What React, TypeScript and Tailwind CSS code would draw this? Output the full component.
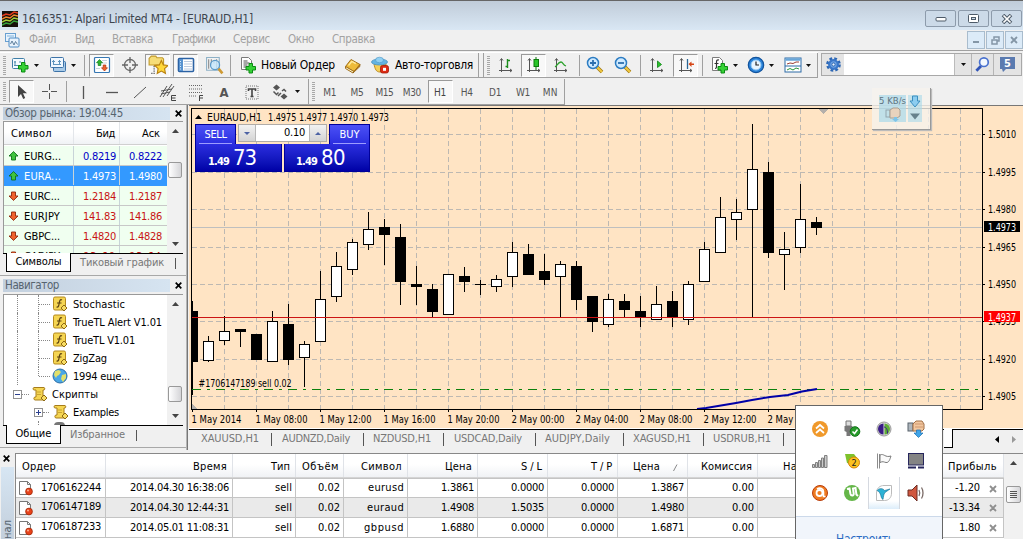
import { useLayoutEffect, useRef, type ReactNode } from "react";

/* Text set to a fixed measure: the tracking is worked out from the natural width. */
function Fit({ w, className = "", children }: { w: number; className?: string; children: string }) {
  const ref = useRef<HTMLSpanElement>(null);
  useLayoutEffect(() => {
    const el = ref.current;
    if (!el) return;
    el.style.letterSpacing = "0px";
    const natural = el.getBoundingClientRect().width;
    el.style.letterSpacing = `${(w - natural) / children.length}px`;
  }, [w, children]);
  return (
    <span ref={ref} className={`inline-block shrink-0 whitespace-pre ${className}`}>
      {children}
    </span>
  );
}

/* ---------- toolbar parts ---------- */

const PRESSED =
  "flex h-[23px] w-[25px] shrink-0 items-center justify-center border border-r-white border-b-white border-l-[#9a9a9a] border-t-[#9a9a9a] bg-[#f8f8f8]";

const Cell = ({ className, children }: { className: string; children: ReactNode }) => (
  <div className={`flex h-full shrink-0 items-center justify-center ${className}`}>{children}</div>
);
const Sep = ({ className = "" }: { className?: string }) => (
  <div className={`h-[21px] w-px shrink-0 bg-[#a0a0a0] ${className}`} />
);
const Edge = ({ className = "" }: { className?: string }) => (
  <div className={`h-full w-px shrink-0 bg-[#a0a0a0] ${className}`} />
);
const Grip = ({ className = "" }: { className?: string }) => (
  <div className={`flex h-full shrink-0 items-center ${className}`}>
    <div className="h-[19px] w-[3px] bg-[repeating-linear-gradient(#a8a8a8_0_1px,#f0f0f0_1px_2px)]" />
  </div>
);
const Caret = ({ className = "" }: { className?: string }) => (
  <div className={`flex h-full w-2 shrink-0 items-center justify-center ${className}`}>
    <svg width="5" height="3" viewBox="0 0 5 3"><path d="M0 0h5L2.500 3z" fill="#111" /></svg>
  </div>
);
const Svg = ({ s = 18, children }: { s?: number; children: ReactNode }) => (
  <svg width={s} height={s} viewBox="0 0 18 18" fill="none" className="shrink-0">{children}</svg>
);
const Plus = ({ x, y }: { x: number; y: number }) => (
  <path
    transform={`translate(${x} ${y})`}
    d="M3.500 .5h3.500v3h3v3.500h-3v3H3.500v-3h-3V3.500h3z"
    fill="#35d135"
    stroke="#0a8a12"
  />
);
const Axes = () => <path d="M4.500 3v13M2 14.500h13M3 4.500l1.500-2 1.500 2M13 13l2 1.500-2 1.500" stroke="#555" />;

const NewChartIcon = () => (
  <Svg><rect x="1.500" y="2.500" width="12" height="10" rx="1" fill="#f4fbff" stroke="#3f7ea8" /><path d="M4 5v5M3 9.500h7M3 6h2M9 5v2" stroke="#4f8cae" /><Plus x={7} y={6} /></Svg>
);
const ProfilesIcon = () => (
  <Svg><rect x="4.500" y="5.500" width="12" height="10" rx="1" fill="#a9cbe8" stroke="#3d73a8" /><rect x="1.500" y="1.500" width="13" height="10" rx="1" fill="#f0f8ff" stroke="#3d73a8" /><path d="M4.500 4v5M3 5.500h3M10.500 4v5M4 8.500h8M9 5.500h3" stroke="#5e94bd" /></Svg>
);
const MarketIcon = () => (
  <Svg><rect x="1.500" y="1.500" width="15" height="15" rx="1" fill="#fff" stroke="#3677b3" strokeWidth="1.200" /><path d="M9 4.500h5M9 7h5M3 12.500h4" stroke="#c8d4dc" /><path d="M6.500 3.500L9.500 6.700H7.800V9.500H5.200V6.700H3.500z" fill="#2fb52f" stroke="#0d7c1a" strokeWidth=".7" /><path d="M11.500 15L14.500 11.800h-1.700V9h-2.600v2.800H8.500z" fill="#f0622a" stroke="#a92e08" strokeWidth=".7" /></Svg>
);
const TargetIcon = () => (
  <Svg><circle cx="9" cy="9" r="5.500" stroke="#666" strokeWidth="1.300" /><path d="M9 1v6M9 11v6M1 9h6M11 9h6" stroke="#666" strokeWidth="1.300" /></Svg>
);
const STAR = "M0-6l1.800 3.900 4.200.5-3.100 2.900.8 4.200L0 3.500-3.700 5.500l.8-4.200L-6-1.600l4.200-.5z";
const FolderStarIcon = () => (
  <Svg s={20}><path d="M1 3l2-2h4l1 1.500h5l1 1V9H1z" fill="#f6dd78" stroke="#c19a2c" /><path d="M5.500 10v7M3 16.500h4" stroke="#444" strokeDasharray="1 1" /><path transform="translate(12 11)" d={STAR} fill="#ffd83b" stroke="#b98110" /></Svg>
);
const TerminalIcon = () => (
  <Svg><rect x="1.500" y="2.500" width="15" height="13" rx="1" fill="#fff" stroke="#2b62a4" strokeWidth="1.600" /><path d="M2 3h4v12H2z" fill="#5893d0" /><path d="M7 5.500h8M7 8h8M7 10.500h8M7 13h8" stroke="#bccbe0" /><path d="M3.500 5v9" stroke="#d9ecff" strokeDasharray="1 1.500" /></Svg>
);
const TesterIcon = () => (
  <Svg s={19}><path d="M1.500 1.500h12v12h-12z" fill="#f3f3f3" stroke="#8db0c6" /><path d="M3.500 3v9M6 3v5M8.500 4v3M11 3v9" stroke="#868686" /><circle cx="9.500" cy="8.500" r="4.300" fill="#c8e8fc" fillOpacity=".85" stroke="#5d9ccb" strokeWidth="1.200" /><path d="M12.800 12l3.700 4.500" stroke="#cf9a33" strokeWidth="2.500" /></Svg>
);
const NewOrderIcon = () => (
  <Svg><path d="M2.500 1.500h7l3 3v9h-10z" fill="#fff" stroke="#7a7a7a" /><path d="M4.500 5h4M4.500 7h6M4.500 9h4M4.500 11h3" stroke="#4e4e4e" /><Plus x={6.500} y={7} /></Svg>
);
const BookIcon = () => (
  <Svg><path d="M1.500 10.500L7 3.500l9 5-6 7z" fill="#eebb3a" stroke="#a1701c" strokeLinejoin="round" /><path d="M1.500 10.500v2L9 17l1-1.500z" fill="#fff3c9" stroke="#a1701c" strokeLinejoin="round" /><path d="M10 15.500l6-7v2L9 17z" fill="#c78a22" stroke="#8c5a10" strokeWidth=".6" /><path d="M4.500 9.500L7.800 5.500l4 2.200" stroke="#ffe99b" strokeWidth="1.400" /></Svg>
);
const ExpertIcon = () => (
  <Svg s={18}><path d="M3 8c1 5 2 8 6 8s6-3 6-8z" fill="#f5cf58" stroke="#bd8d22" /><ellipse cx="8.500" cy="6" rx="8" ry="3" fill="#63b4e4" stroke="#4a93c2" strokeWidth=".8" /><ellipse cx="8.500" cy="4" rx="4" ry="2.800" fill="#8fd0f3" stroke="#4a93c2" strokeWidth=".6" /><rect x="9.500" y="9.500" width="8" height="7.500" rx="2" fill="#de2c14" stroke="#a31806" strokeWidth=".8" /><rect x="12" y="11.800" width="3" height="3" fill="#fff" /></Svg>
);
const BarIcon = () => <Svg><Axes /><path d="M10.500 3v9M8.500 10.500h2M10.500 4.500h2.500" stroke="#1c8c1c" strokeWidth="1.400" /></Svg>;
const CandleIcon = () => <Svg><Axes /><path d="M11 1v13" stroke="#0b7a0b" /><rect x="9" y="3.500" width="4.500" height="7" fill="#27c427" stroke="#0b7a0b" /></Svg>;
const LineIcon = () => <Svg><Axes /><path d="M3 11c2-1 3-5 6-5 2 0 2 3 5 4" stroke="#2ba22b" strokeWidth="1.300" /></Svg>;
const ZoomGlass = ({ plus }: { plus: boolean }) => (
  <Svg><path d="M11 11l5 5" stroke="#9c7411" strokeWidth="3.600" /><path d="M11 11l5 5" stroke="#f1c93f" strokeWidth="2.200" /><circle cx="7" cy="7" r="5.500" fill="#cfeaff" stroke="#2c7cc2" strokeWidth="1.500" /><path d={plus ? "M4 7h6M7 4v6" : "M4 7h6"} stroke="#2c6fae" strokeWidth="1.800" /></Svg>
);
const ScrollIcon = () => <Svg><Axes /><path d="M9.500 5l4 3.500-4 3z" fill="#2bc32b" stroke="#0b8213" strokeWidth=".8" /></Svg>;
const ShiftIcon = () => <Svg><Axes /><path d="M10.500 3v10" stroke="#2a6695" strokeWidth="1.300" /><path d="M11.500 8l3-2.500v2H17v1.500h-2.500v2z" fill="#d64516" /></Svg>;
const IndicatorsIcon = () => (
  <Svg><path d="M1.500 1.500h7l3 3v10h-10z" fill="#fff" stroke="#7d7d7d" /><path d="M8 4c-2-.5-2.500.5-2.500 2v5c0 1-.5 1.500-1.500 1.500M3.500 7.500h4" stroke="#333" strokeWidth="1.200" /><Plus x={6.500} y={7} /></Svg>
);
const ClockIcon = () => (
  <Svg><circle cx="9" cy="9" r="7.700" fill="#2a83da" stroke="#12539c" strokeWidth="1.200" /><circle cx="9" cy="9" r="5" fill="#e8f5ff" stroke="#8fc7f4" /><path d="M9 5.500V9h3" stroke="#222" strokeWidth="1.200" /></Svg>
);
const TemplateIcon = () => (
  <Svg><rect x="1" y="2" width="16" height="14" fill="#fff" stroke="#2c6aa6" /><path d="M1.500 3.500h15" stroke="#69a6d8" strokeWidth="2.500" /><path d="M1 10h16" stroke="#2c6aa6" /><path d="M3 8l3-1 3 .5 3-1.500h3" stroke="#9b4136" /><path d="M3 14l3-1.500 3 1.500 3-2 3 1" stroke="#28963a" /></Svg>
);
const GearIcon = () => (
  <Svg s={17}><circle cx="9" cy="9" r="6.300" stroke="#2d67b4" strokeWidth="3" strokeDasharray="2.800 2.150" /><circle cx="9" cy="9" r="4.600" fill="#6ea3e4" stroke="#3a77c8" strokeWidth="2.400" /><circle cx="9" cy="9" r="1.700" fill="#e9f2fc" stroke="#2c63ab" /></Svg>
);
const Glass = () => <Svg s={17}><path d="M7.500 10.500L2.500 15.500" stroke="#3154b7" strokeWidth="3" /><circle cx="10.500" cy="6.500" r="4.600" fill="#f4f9ff" stroke="#4a72cf" strokeWidth="1.800" /></Svg>;

const Stroke = ({ d, w = 1 }: { d: string; w?: number }) => <Svg><path d={d} stroke="#555" strokeWidth={w} /></Svg>;

function Toolbar() {
  return (
    <div className="flex h-[26px] w-[818px] shrink-0 items-center border-y border-t-white border-b-[#a0a0a0]">
      <Grip className="w-2 pl-[3px]" />
      <Cell className="w-6"><NewChartIcon /></Cell><Caret />
      <Cell className="ml-[7px] w-[22px]"><ProfilesIcon /></Cell><Caret />
      <Sep className="ml-[7px]" />
      <div className={`${PRESSED} ml-1`}><MarketIcon /></div>
      <Cell className="w-[31px]"><TargetIcon /></Cell>
      <div className={PRESSED}><FolderStarIcon /></div>
      <div className={`${PRESSED} ml-[3px]`}><TerminalIcon /></div>
      <Cell className="w-8"><TesterIcon /></Cell>
      <Sep />
      <Cell className="ml-[6px] w-[22px]"><NewOrderIcon /></Cell>
      <div className="ml-[2px] w-[74px] text-[12px] text-black"><Fit w={74}>Новый Ордер</Fit></div>
      <Cell className="ml-[6px] w-6"><BookIcon /></Cell>
      <Cell className="ml-[3px] w-6"><ExpertIcon /></Cell>
      <div className="ml-[3px] w-[78px] text-[12px] text-black"><Fit w={78}>Авто-торговля</Fit></div>
      <Edge className="ml-[5px]" />
      <Edge className="ml-1" />
      <Grip className="w-[9px] pl-[3px]" />
      <Cell className="w-[26px]"><BarIcon /></Cell>
      <div className={`${PRESSED} ml-[2px]`}><CandleIcon /></div>
      <Cell className="w-[30px]"><LineIcon /></Cell>
      <Sep className="ml-[3px]" />
      <Cell className="w-[29px]"><ZoomGlass plus /></Cell>
      <Cell className="w-[27px]"><ZoomGlass plus={false} /></Cell>
      <Sep className="ml-1" />
      <Cell className="w-8"><ScrollIcon /></Cell>
      <div className={PRESSED}><ShiftIcon /></div>
      <Sep className="ml-1" />
      <Cell className="ml-[6px] w-[22px]"><IndicatorsIcon /></Cell><Caret />
      <Cell className="ml-[6px] w-[22px]"><ClockIcon /></Cell><Caret />
      <Cell className="ml-[7px] w-[22px]"><TemplateIcon /></Cell><Caret />
      <Edge className="ml-[5px]" />
    </div>
  );
}

function SearchBox() {
  return (
    <div className="ml-[3px] mt-[1px] flex h-[23px] w-[201px] border border-[#a8a8a8] bg-[#e4e4e4]">
      <div className="flex w-[22px] items-center justify-center"><GearIcon /></div>
      <div className="w-[111px] border-r border-[#bbb] bg-white" />
      <div className="flex w-4 items-center justify-center"><Caret /></div>
      <div className="flex w-[22px] items-center justify-center border-l border-[#b5b5b5]"><Glass /></div>
      <div className="flex flex-1 items-center justify-center border-l border-[#b5b5b5]">
        <svg width="18" height="17" viewBox="0 0 18 17">
          <path d="M1 1h15v12H7l-3 3-1-3H1z" fill="#5b7bb0" />
          <text x="8.500" y="11" textAnchor="middle" fill="#fff" fontSize="11" fontWeight="bold">5</text>
        </svg>
      </div>
    </div>
  );
}

const FRAMES: [string, number, string][] = [
  ["M1", 13, "w-[28px]"], ["M5", 13, "w-[28px]"], ["M15", 18, "w-[28px]"], ["M30", 18, "w-[28px]"],
  ["H1", 12, ""], ["H4", 12, "w-[29px]"], ["D1", 12, "w-[29px]"], ["W1", 14, "w-[28px]"], ["MN", 15, "w-[28px]"],
];

function LineToolbar() {
  return (
    <div className="flex h-[26px] shrink-0 items-center border-b border-[#a0a0a0]">
      <Grip className="w-[9px] pl-[3px]" />
      <div className={PRESSED}>
        <Svg><path d="M5 2v12l3-3 2.200 5 2-1-2.200-4.800H14z" fill="#444" /></Svg>
      </div>
      <Cell className="w-[31px]"><Stroke d="M8.500 1v6M8.500 10v6M1 8.500h6M10 8.500h6" /></Cell>
      <Sep className="ml-px" />
      <Cell className="w-8"><Stroke d="M9.500 3v13" w={1.300} /></Cell>
      <Cell className="w-[26px]"><Stroke d="M3 9.500h12" w={1.300} /></Cell>
      <Cell className="w-[30px]"><Stroke d="M3 15L15 4" /></Cell>
      <Cell className="w-[26px]">
        <Svg><path d="M1 14L8 3M4 14L13 1M8 13L15 3M2 8l11-2M2 11l9-2" stroke="#555" /><path d="M17 12.500h-4.500v5H17M13 15h3.500" stroke="#444" /></Svg>
      </Cell>
      <Cell className="w-[30px]">
        <Svg><path d="M2 2.500h14M2 6h14M2 9.500h14M2 13h8" stroke="#666" strokeDasharray="1 1" /><path d="M12.500 18v-5.500H16M13 15h3" stroke="#444" /></Svg>
      </Cell>
      <Cell className="w-[26px] pt-[2px] text-[13px] font-bold text-[#555]">A</Cell>
      <Cell className="w-[30px]">
        <Svg><rect x="3" y="3" width="12" height="13" stroke="#777" strokeDasharray="1 1" /><path d="M5.500 8V6h7v2M9 6v8M7.500 13.500h3" stroke="#444" strokeWidth="1.600" /></Svg>
      </Cell>
      <Cell className="w-[26px]">
        <Svg><path d="M2 4.500l3.500-3 3.500 3-3.500 3zM9.500 13.500l3.500-3 3.500 3-3.500 3z" fill="#555" /><path d="M2.500 8.500l3 3 2-2M7 13l3-3M11 8l2-1.500 2 2" stroke="#555" strokeWidth="1.500" /></Svg>
      </Cell>
      <Caret /><Edge className="ml-[7px]" />
      <Grip className="w-[7px] pl-[3px]" />
      {FRAMES.map(([name, w, cls]) => (
        <div
          key={name}
          className={name === "H1" ? `${PRESSED} ml-[2px] pt-[2px] text-[10px] text-[#444]` : `flex h-full items-center justify-center pt-[2px] text-[10px] text-[#555] ${cls}`}
        >
          <Fit w={w}>{name}</Fit>
        </div>
      ))}
      <Edge />
    </div>
  );
}

/* ---------- left panels ---------- */

const CloseX = () => (
  <svg width="7" height="7" viewBox="0 0 7 7"><path d="M.7.7l5.600 5.600M6.300.7L.7 6.300" stroke="#000" strokeWidth="1.700" /></svg>
);

function PanelTitle({ title, w }: { title: string; w: number }) {
  return (
    <div className="flex h-[13px] items-center text-[11.5px] leading-[13px] text-[#56646f]">
      <div className="h-[13px] w-[167px] bg-gradient-to-r from-[#c3d0de] to-[#d6e4f1] pl-[2px]"><Fit w={w}>{title}</Fit></div>
      <div className="flex flex-1 justify-center pl-1"><CloseX /></div>
    </div>
  );
}

function ScrollBar({ thumb }: { thumb: string }) {
  return (
    <div className="relative flex w-4 shrink-0 flex-col items-center justify-between bg-[#f1f1f1] py-[7px]">
      <svg width="7" height="4" viewBox="0 0 7 4"><path d="M0 4L3.500 0 7 4z" fill="#444" /></svg>
      <div className={`absolute left-[1px] h-4 w-[14px] rounded-[2px] border border-[#999] bg-gradient-to-r from-white to-[#d5d5d8] ${thumb}`} />
      <svg width="7" height="4" viewBox="0 0 7 4"><path d="M0 0L3.500 4 7 0z" fill="#444" /></svg>
    </div>
  );
}

const QUOTES: [string, number, string, string, boolean, string][] = [
  ["EURG...", 37, "0.8219", "0.8222", true, "text-[#0000c8]"],
  ["EURA...", 37, "1.4973", "1.4980", true, "text-white"],
  ["EURC...", 36, "1.2184", "1.2187", false, "text-[#c81414]"],
  ["EURJPY", 36, "141.83", "141.86", false, "text-[#c81414]"],
  ["GBPC...", 36, "1.4820", "1.4828", false, "text-[#c81414]"],
  ["CADJPY", 36, "93.60", "93.64", false, "text-[#c81414]"],
];

const Arrow = ({ up }: { up: boolean }) => (
  <svg width="11" height="10" viewBox="0 0 11 10" className="-mt-[2px]">
    {up ? (
      <path d="M5.500.6l4.500 4.400H7.500v4h-4V5H1z" fill="#3fc43f" stroke="#0d701a" strokeWidth=".9" />
    ) : (
      <path d="M5.500 9.400L10 5H7.500V1h-4v4H1z" fill="#f0622c" stroke="#8d260a" strokeWidth=".9" />
    )}
  </svg>
);

const HEAD = "bg-gradient-to-b from-white from-45% to-[#f0f2f5]";

function PanelTabs({ active, aw, box, other, ow }: { active: string; aw: number; box: string; other: string; ow: number }) {
  return (
    <div className="flex h-[19px] items-start text-[11px]">
      <div className="h-px w-[3px] bg-black" />
      <div className={`flex h-[19px] items-center justify-center border-x-[1.5px] border-b-[1.5px] border-black bg-white text-black ${box}`}>
        <Fit w={aw}>{active}</Fit>
      </div>
      <div className="flex h-[19px] flex-1 items-center border-t border-black pl-[9px] text-[#777]">
        <Fit w={ow}>{other}</Fit>
        <div className="ml-[11px] h-[11px] w-px bg-[#555]" />
      </div>
    </div>
  );
}

function MarketWatch() {
  return (
    <div className="flex h-[171px] flex-col border-b border-[#a8a8a8] pl-[3px] pr-[3px] pt-[2px]">
      <PanelTitle title="Обзор рынка: 19:04:45" w={118} />
      <div className="mt-[1px] flex h-[132px] shrink-0 overflow-hidden border-l border-t border-[#999] bg-white">
        <div className="w-[163px]">
          <div className={`flex h-[23px] items-center border-b border-[#d0d0d0] text-[11px] text-black ${HEAD}`}>
            <div className="w-[69px] pl-[7px] pt-[3px]"><Fit w={41}>Символ</Fit></div>
            <div className="flex h-full w-[46px] items-center justify-end border-l border-[#e3e6ea] pr-1 pt-[3px]"><Fit w={19}>Бид</Fit></div>
            <div className="flex h-full w-[48px] items-center justify-end border-l border-[#e3e6ea] pr-[7px] pt-[3px]"><Fit w={18}>Аск</Fit></div>
          </div>
          <div className="mt-[1px] text-[11px]">
            {QUOTES.map(([name, w, bid, ask, up, tone], i) => (
              <div
                key={name}
                className={`flex h-5 items-center border-b ${i === 1 ? "border-[#3399ff] bg-[#3399ff] text-white" : "border-[#c8c8c8] bg-[#f0fff0] text-black"}`}
              >
                <div className="flex w-[69px] items-center gap-[5px] pl-[4px] pt-[3px]"><Arrow up={up} /><Fit w={w}>{name}</Fit></div>
                <div className={`flex h-full w-[46px] items-center justify-end border-l border-[#c8d4d8] pr-[3px] pt-[3px] ${tone}`}><Fit w={33}>{bid}</Fit></div>
                <div className={`flex h-full w-[48px] items-center justify-end border-l border-[#c8d4d8] pr-[5px] pt-[3px] ${tone}`}><Fit w={33}>{ask}</Fit></div>
              </div>
            ))}
          </div>
        </div>
        <ScrollBar thumb="top-[40px]" />
      </div>
      <PanelTabs active="Символы" aw={46} box="w-[65px]" other="Тиковый график" ow={84} />
    </div>
  );
}

const FnIcon = () => (
  <svg width="16" height="16" viewBox="0 0 16 16" fill="none">
    <rect x="1.500" y="1" width="12" height="13" rx="1.500" fill="#f5d552" stroke="#b58a1d" />
    <path d="M10 4c-2-1-2.500 1-2.800 3-.3 2.500-.6 4.500-2.700 4M5 7h4.500" stroke="#5c4210" strokeWidth="1.200" />
    <path d="M12 9l3 3-3 3-3-3z" fill="#f8dc62" stroke="#8e6a14" />
  </svg>
);
const GlobeIcon = () => (
  <svg width="16" height="16" viewBox="0 0 16 16">
    <circle cx="8" cy="8" r="7" fill="#4aa7e6" stroke="#2c6da6" />
    <path d="M3 3l4-1 2 2-2 3-2 1-1 2-2-3zM10 7l4-1v4l-3 4-2-3z" fill="#e2e06a" />
  </svg>
);
const ScriptIcon = () => (
  <svg width="16" height="16" viewBox="0 0 16 16" fill="none">
    <path d="M2 1.500h10c1 0 1 2.500 0 2.500h-1v7h1v3H3c-1.500 0-1.500-3 0-3h1V4H2C.8 4 .8 1.500 2 1.500z" fill="#f5d552" stroke="#a67c1a" />
    <path d="M5.500 6h4M5.500 8.500h3" stroke="#9c7417" strokeDasharray="1 1" />
    <path d="M12 9l3 3-3 3-3-3z" fill="#f8dc62" stroke="#8e6a14" />
  </svg>
);
const DOT_L = "border-l border-dotted border-[#888]";

const INDICATORS: [string, number][] = [["Stochastic", 52], ["TrueTL Alert V1.01", 89], ["TrueTL V1.01", 62], ["ZigZag", 34], ["1994 еще...", 57]];

function Navigator() {
  return (
    <div className="flex h-[172px] flex-col border-b border-[#a8a8a8] pl-[3px] pr-[3px] pt-[3px]">
      <PanelTitle title="Навигатор" w={54} />
      <div className="mt-[2px] flex h-[131px] shrink-0 overflow-hidden border-l border-t border-[#999] bg-white">
        <div className="flex w-[163px] flex-col text-[11px] text-black">
          {INDICATORS.map(([name, w], i) => (
            <div key={name} className="flex h-[18px] shrink-0 items-center pl-[13px]">
              <div className={`h-full w-[21px] ${DOT_L}`} />
              <div className={i === 4 ? `h-1/2 self-start ${DOT_L}` : `h-full ${DOT_L}`} />
              <div className="mr-[2px] w-[11px] border-t border-dotted border-[#888]" />
              {i === 4 ? <GlobeIcon /> : <FnIcon />}
              <Fit w={w} className="ml-[5px] pt-[2px]">{name}</Fit>
            </div>
          ))}
          <div className="flex h-[18px] shrink-0 items-center pl-[9px]">
            <div className="flex h-[9px] w-[9px] items-center justify-center border border-[#919191]"><div className="h-px w-[5px] bg-[#2b3f8e]" /></div>
            <div className="mr-[3px] w-[7px] border-t border-dotted border-[#888]" />
            <ScriptIcon />
            <Fit w={46} className="ml-[4px] pt-[2px]">Скрипты</Fit>
          </div>
          <div className="flex h-[18px] shrink-0 items-center pl-[30px]">
            <div className="relative flex h-[9px] w-[9px] items-center justify-center border border-[#919191]">
              <div className="h-px w-[5px] bg-[#2b3f8e]" /><div className="absolute h-[5px] w-px bg-[#2b3f8e]" />
            </div>
            <div className="mr-[4px] w-[6px] border-t border-dotted border-[#888]" />
            <ScriptIcon />
            <Fit w={46} className="ml-[4px] pt-[2px]">Examples</Fit>
          </div>
          <div className="flex h-[18px] shrink-0 pl-[34px]">
            <div className={`h-full w-[16px] ${DOT_L}`} />
            <div className="mt-[1px] h-3 w-[11px] rounded-t bg-[#777]" />
          </div>
        </div>
        <ScrollBar thumb="top-[91px]" />
      </div>
      <PanelTabs active="Общие" aw={36} box="w-[55px]" other="Избранное" ow={55} />
    </div>
  );
}

/* ---------- chart ---------- */

/* centre x, body top, body bottom, wick top, wick bottom, filled */
const CANDLES: [number, number, number, number, number, boolean][] = [
  [208, 341, 360, 336, 362, false], [224, 331, 340, 316, 345, false], [240, 329, 332, 329, 347, true],
  [256, 334, 360, 334, 360, true], [272, 321, 361, 311, 362, false], [288, 324, 360, 304, 365, true],
  [304, 344, 357, 341, 387, false], [320, 299, 341, 271, 342, false], [336, 266, 296, 252, 302, false],
  [352, 242, 269, 239, 275, false], [368, 229, 244, 212, 250, false], [384, 227, 235, 219, 265, true],
  [400, 237, 282, 224, 305, true], [416, 284, 287, 266, 305, true], [432, 289, 312, 284, 317, true],
  [448, 274, 314, 274, 315, false], [464, 276, 282, 267, 292, true], [480, 284, 285, 280, 295, true],
  [496, 279, 286, 275, 292, false], [512, 252, 276, 242, 287, false], [528, 254, 275, 244, 275, true],
  [544, 271, 280, 254, 285, true], [560, 264, 276, 261, 317, false], [576, 266, 300, 261, 310, true],
  [592, 296, 322, 296, 332, true], [608, 299, 324, 294, 327, false], [624, 301, 310, 294, 317, true],
  [640, 311, 318, 296, 327, true], [656, 304, 319, 286, 320, false], [672, 301, 318, 291, 327, true],
  [688, 284, 319, 281, 325, false], [704, 249, 281, 242, 282, false], [720, 217, 252, 197, 253, false],
  [736, 212, 219, 199, 240, false], [752, 169, 209, 124, 317, false], [768, 172, 253, 162, 258, true],
  [784, 249, 254, 232, 290, false], [800, 219, 247, 184, 253, false], [816, 222, 228, 217, 235, true],
];
const PRICES: [string, number][] = [["1.5010", 134], ["1.4995", 172], ["1.4980", 209], ["1.4965", 247], ["1.4950", 284], ["1.4935", 321], ["1.4920", 359], ["1.4905", 396]];
const TIMES: [string, number][] = [
  ["1 May 2014", 50], ["1 May 08:00", 52], ["1 May 12:00", 52], ["1 May 16:00", 52], ["1 May 20:00", 52],
  ["2 May 00:00", 53], ["2 May 04:00", 53], ["2 May 08:00", 53], ["2 May 12:00", 53], ["2 May 16:00", 53],
];
const COLS = Array.from({ length: 24 }, (_, i) => 224 + i * 32);
/* long-short rhythm of the open position's line */
const DASHES = Array.from({ length: 33 }, (_, i) => 192 + i * 24);

function Chart() {
  return (
    <svg width="834" height="322" viewBox="189 106 834 322" className="block" fontSize="10.500" shapeRendering="crispEdges">
      <rect x="189" y="106" width="834" height="322" fill="#ffe4c4" />
      <g stroke="#bdb8b2" strokeDasharray="5 3">
        {COLS.map((x) => <path key={x} d={`M${x + 0.5} 109V409`} />)}
        {PRICES.map(([p, y]) => <path key={p} d={`M192 ${y + 0.5}H982`} />)}
      </g>
      <rect x="192" y="227" width="790" height="1" fill="#bfbfbf" />
      <path d="M819 109h9l-4.500 5z" fill="#b5b0ab" />
      <path d="M192 404v5h5z" fill="#b5b0ab" />
      <path d="M192 301h1v94h-1zM192 311h6v51h-6z" fill="#000" />
      {CANDLES.map(([x, t, b, wt, wb, full]) => (
        <g key={x}>
          <rect x={x} y={wt} width="1" height={wb - wt} fill="#000" />
          {full ? (
            <rect x={x - 5} y={t} width="11" height={b - t} fill="#000" />
          ) : (
            <rect x={x - 4.500} y={t + 0.500} width="10" height={b - t} fill="#fff" stroke="#000" />
          )}
        </g>
      ))}
      <rect x="480" y="284" width="1" height="1" fill="#000" />
      <rect x="192" y="317" width="790" height="1" fill="#cc1414" />
      {DASHES.map((x) => (
        <path key={x} d={x + 18 > 980 ? `M${x} 389h9v1h-9z` : `M${x} 389h9v1h-9zM${x + 15} 389h3v1h-3z`} fill="#0c800c" />
      ))}
      <path d="M697 409l9-1 15-2.500 15-2.500 16-3 18-3 18-2 14-3.500 15-2.500" fill="none" stroke="#0000a8" strokeWidth="2" shapeRendering="auto" />
      <path d="M191.500 409.500V108.500H982.500V409.500z" fill="none" stroke="#000" />
      <g shapeRendering="auto">
        {PRICES.map(([p, y]) => (
          <g key={p}>
            <path d={`M983 ${y + 0.5}h2`} stroke="#000" />
            <text x="988" y={y + 3.500} textLength="28" lengthAdjust="spacingAndGlyphs">{p}</text>
          </g>
        ))}
        {TIMES.map(([t, w], i) => (
          <g key={t}>
            <path d={`M${i === 0 ? 192.5 : 192.5 + i * 64} 410v2`} stroke="#000" />
            <text x={191.500 + i * 64} y="423" textLength={w} lengthAdjust="spacingAndGlyphs">{t}</text>
          </g>
        ))}
        <rect x="984" y="221" width="36" height="11" fill="#000" />
        <text x="988" y="230.500" fill="#fff" textLength="28" lengthAdjust="spacingAndGlyphs">1.4973</text>
        <rect x="984" y="311" width="36" height="11" fill="#f00" />
        <text x="988" y="320.500" fill="#fff" textLength="28" lengthAdjust="spacingAndGlyphs">1.4937</text>
        <text x="198.500" y="387" textLength="93" lengthAdjust="spacingAndGlyphs">#1706147189 sell 0.02</text>
        <path d="M195 119h7l-3.500-4z" />
        <text x="207" y="120.500" textLength="55" lengthAdjust="spacingAndGlyphs">EURAUD,H1</text>
        <text x="268" y="120.500" textLength="121" lengthAdjust="spacingAndGlyphs">1.4975 1.4977 1.4970 1.4973</text>
      </g>
    </svg>
  );
}

const BLUE_TOP = "flex h-5 w-[41px] flex-col items-center border border-b-0 border-[#00009a] bg-gradient-to-b from-[#4c50f6] to-[#2b2de0] pt-[3px] text-[11px] leading-[13px] text-white";
const BLUE_LOW = "flex h-7 items-baseline border border-[#00009a] bg-gradient-to-b from-[#2b2de0] to-[#0000a6] text-white";

function OneClick() {
  const spin = "flex w-[16px] items-center justify-center bg-gradient-to-b from-[#f2f2f2] to-[#d4d4d4]";
  return (
    <div className="absolute left-[6px] top-[18px] flex w-[175px] flex-col">
      <div className="flex justify-between">
        <div className={BLUE_TOP}><Fit w={22}>SELL</Fit><div className="mt-[2px] h-px w-[33px] bg-[#9d9dff]" /></div>
        <div className="flex h-[18px] w-[89px] border border-[#b0aca8] bg-white text-[11px] text-black">
          <div className={spin}><svg width="6" height="3" viewBox="0 0 6 3"><path d="M0 0h6L3 3z" fill="#4c62a4" /></svg></div>
          <div className="flex flex-1 items-center justify-end border-x border-[#b8b8b8] pr-[4px]"><Fit w={21}>0.10</Fit></div>
          <div className={spin}><svg width="6" height="3" viewBox="0 0 6 3"><path d="M0 3h6L3 0z" fill="#4c62a4" /></svg></div>
        </div>
        <div className={BLUE_TOP}><Fit w={20}>BUY</Fit><div className="mt-[2px] h-px w-[33px] bg-[#9d9dff]" /></div>
      </div>
      <div className="flex justify-between">
        <div className={`${BLUE_LOW} w-[87px] border-t-0 pl-[12px] text-[11px] font-bold`}>
          <Fit w={21}>1.49</Fit><Fit w={23} className="ml-[4px] text-[22px] font-normal leading-[28px]">73</Fit>
        </div>
        <div className={`${BLUE_LOW} w-[86px] border-t-0 pl-[11px] text-[11px] font-bold`}>
          <Fit w={21}>1.49</Fit><Fit w={24} className="ml-[4px] text-[22px] font-normal leading-[28px]">80</Fit>
        </div>
      </div>
    </div>
  );
}

const CHART_TABS: [string, number, string][] = [
  ["XAUUSD,H1", 58, "w-[83px] pl-[12px]"], ["AUDNZD,Daily", 68, "w-[92px] pl-[10px]"], ["NZDUSD,H1", 58, "w-[80px] pl-[9px]"],
  ["USDCAD,Daily", 68, "w-[92px] pl-[10px]"], ["AUDJPY,Daily", 65, "w-[88px] pl-[9px]"], ["XAGUSD,H1", 58, "w-[80px] pl-[9px]"],
  ["USDRUB,H1", 58, "w-[80px] pl-[9px]"],
];

function ChartTabs() {
  return (
    <div className="flex h-[21px] items-start text-[11px] text-[#777]">
      <div className="flex h-full w-[755px] items-center border-t border-black pb-[2px]">
        {CHART_TABS.map(([name, w, cls]) => (
          <div key={name} className={`flex h-[13px] items-center border-r border-[#555] ${cls}`}><Fit w={w}>{name}</Fit></div>
        ))}
      </div>
      <div className="h-[19px] w-[9px] border-b-[1.5px] border-r-[1.500px] border-black bg-white" />
      <div className="flex h-[19px] flex-1 items-center justify-end border-t border-black pr-[7px]">
        <svg width="21" height="7" viewBox="0 0 21 7"><path d="M4 0v7L0 3.500z" fill="#000" /><path d="M17 0v7l4-3.500z" fill="#999" /></svg>
      </div>
    </div>
  );
}

/* ---------- terminal ---------- */

type Col = { head: string; hw: number; box: string; hp: string; vals: [string, number][] };
const TABLE: Col[] = [
  { head: "Время", hw: 34, box: "w-[127px]", hp: "pr-[5px]", vals: [["2014.04.30 16:38:06", 99], ["2014.04.30 12:44:31", 99], ["2014.05.01 11:08:31", 99]] },
  { head: "Тип", hw: 19, box: "w-[63px]", hp: "pr-[5px]", vals: [["sell", 17], ["sell", 17], ["sell", 17]] },
  { head: "Объём", hw: 37, box: "w-[48px]", hp: "pr-[4px]", vals: [["0.02", 22], ["0.02", 22], ["0.02", 22]] },
  { head: "Символ", hw: 41, box: "w-[64px]", hp: "pr-[5px]", vals: [["eurusd", 36], ["euraud", 37], ["gbpusd", 40]] },
  { head: "Цена", hw: 27, box: "w-[70px]", hp: "pr-[5px]", vals: [["1.3861", 33], ["1.4908", 33], ["1.6880", 33]] },
  { head: "S / L", hw: 21, box: "w-[70px]", hp: "pr-[5px]", vals: [["0.0000", 33], ["1.5035", 33], ["0.0000", 33]] },
  { head: "T / P", hw: 21, box: "w-[70px]", hp: "pr-[5px]", vals: [["0.0000", 33], ["0.0000", 33], ["0.0000", 33]] },
  { head: "Цена", hw: 27, box: "w-[70px]", hp: "pr-[8px]", vals: [["1.3867", 33], ["1.4980", 33], ["1.6871", 33]] },
  { head: "Комиссия", hw: 51, box: "w-[70px]", hp: "pr-[5px]", vals: [["0.00", 22], ["0.00", 22], ["0.00", 22]] },
];
const ORDERS = ["1706162244", "1706147189", "1706187233"];
const PROFITS: [string, number][] = [["-1.20", 25], ["-13.34", 31], ["1.80", 21]];

const OrderIcon = () => (
  <svg width="14" height="16" viewBox="0 0 14 16">
    <path d="M.5 1.500h8l3 3v10H.5z" fill="#fff" stroke="#777" /><path d="M8.500 1.500v3h3" fill="none" stroke="#777" />
    <circle cx="10" cy="11.500" r="3.400" fill="#e8431a" stroke="#a32809" strokeWidth=".8" /><circle cx="9" cy="10.500" r="1" fill="#ffae90" />
  </svg>
);

function Terminal() {
  return (
    <div className="flex h-[89px] shrink-0 overflow-hidden pt-[3px]">
      <div className="flex w-[15px] shrink-0 flex-col items-start">
        <div className="flex h-[14px] items-start pl-[3px] pt-[2px]"><CloseX /></div>
        <div className="ml-[1px] flex w-[13px] flex-1 flex-col justify-end bg-gradient-to-b from-[#d7e6f3] to-[#c3cfdc] text-[11px] leading-[13px] text-[#56646f]">
          <span className="w-[13px] rotate-180 [writing-mode:vertical-rl]">нал</span>
        </div>
      </div>
      <div className="flex flex-1 flex-col border-l border-t border-[#888] bg-white text-[11px] text-black">
        <div className={`flex h-[24px] shrink-0 items-center border-b border-[#d4d4d4] ${HEAD}`}>
          <div className="w-[89px] pl-[6px] pt-[3px]"><Fit w={34}>Ордер</Fit></div>
          {TABLE.map((c, i) => (
            <div key={i} className={`flex h-full shrink-0 items-center justify-end border-l border-[#e0e3e8] pt-[3px] ${c.box} ${c.hp}`}>
              <Fit w={c.hw}>{c.head}</Fit>
              {i === 7 && <svg width="6" height="7" viewBox="0 0 6 7" className="ml-[13px]"><path d="M.5 7L4 .5" stroke="#888" /></svg>}
            </div>
          ))}
          <div className="flex h-full w-[187px] items-center border-l border-[#e0e3e8] pl-[25px] pt-[3px]"><Fit w={40}>Налоги</Fit></div>
          <div className="flex h-full w-[60px] items-center border-r border-[#e0e3e8] pl-[4px] pt-[3px]"><Fit w={49}>Прибыль</Fit></div>
        </div>
        {ORDERS.map((id, r) => (
          <div key={id} className={`flex h-5 shrink-0 items-center border-b border-[#c4c4c4] ${r === 0 ? "border-t" : ""} ${r === 1 ? "bg-[#eaeaea]" : "bg-white"}`}>
            <div className="flex w-[89px] items-center gap-[8px] pl-[3px]"><OrderIcon /><Fit w={60}>{id}</Fit></div>
            {TABLE.map((c, i) => (
              <div key={i} className={`flex h-full shrink-0 items-center justify-end border-l border-[#c4c4c4] pr-[3px] pt-[1px] ${c.box}`}>
                <Fit w={c.vals[r][1]}>{c.vals[r][0]}</Fit>
              </div>
            ))}
            <div className="flex h-full w-[247px] items-center justify-end border-x border-[#c4c4c4] pr-[6px] pt-[1px]">
              <Fit w={PROFITS[r][1]}>{PROFITS[r][0]}</Fit>
              <svg width="8" height="8" viewBox="0 0 8 8" className="ml-[9px]"><path d="M1 1l6 6M7 1L1 7" stroke="#8f8f8f" strokeWidth="1.800" /></svg>
            </div>
          </div>
        ))}
      </div>
      <div className="flex w-[19px] shrink-0 flex-col items-center border-t border-[#888] bg-[#f1f1f1] pt-[7px]">
        <svg width="7" height="4" viewBox="0 0 7 4"><path d="M0 4L3.500 0 7 4z" fill="#444" /></svg>
        <div className="mt-[21px] flex h-[17px] w-[15px] flex-col items-center justify-center gap-[1px] rounded-[2px] border border-[#999] bg-gradient-to-r from-white to-[#d5d5d8]">
          {[0, 1, 2, 3].map((i) => <div key={i} className="h-px w-[7px] bg-[#555]" />)}
        </div>
      </div>
    </div>
  );
}

/* ---------- floating items ---------- */

const TrayIcon = ({ children }: { children: ReactNode }) => (
  <div className="flex items-center justify-center"><svg width="18" height="18" viewBox="0 0 18 18" fill="none">{children}</svg></div>
);

function Tray() {
  return (
    <div className="absolute left-[795px] top-[405px] flex h-[134px] w-[148px] flex-col overflow-hidden border border-b-0 border-[#666] bg-white">
      <div className="grid h-[110px] shrink-0 grid-cols-[repeat(4,32px)] grid-rows-[repeat(3,32px)] pl-[8px] pt-[7px]">
        <TrayIcon><circle cx="9" cy="9" r="8" fill="#f0992b" /><path d="M5 8.500l4-3.500 4 3.500M5 13l4-3.500 4 3.500" stroke="#fff" strokeWidth="1.700" /></TrayIcon>
        <TrayIcon><path d="M3 1h5v5H3z" fill="#ddd" stroke="#777" /><path d="M1.500 6h8v5l-2 1v4h-4v-4l-2-1z" fill="#777" /><circle cx="12" cy="11.500" r="4.800" fill="#279b2b" stroke="#13751a" /><path d="M9.500 11.500l2 2 3-4" stroke="#fff" strokeWidth="1.500" /></TrayIcon>
        <TrayIcon><circle cx="9" cy="9" r="7" fill="#d8d8d8" stroke="#999" /><path d="M8.500 3.500a5.500 5.500 0 0 0 0 11z" fill="#3a1c86" /><path d="M9.500 3.500a5.500 5.500 0 0 1 0 11z" fill="#5fae36" /><path d="M9 7c2 0 3.500 2 3.500 6.500" stroke="#3a1c86" /></TrayIcon>
        <TrayIcon><rect x="1" y="3" width="5" height="8" fill="#aeb6bd" stroke="#59636c" /><path d="M6 4l3-3h6l2 3v5l-2 2H6z" fill="#f2c79e" stroke="#a16e45" /><path d="M8 4h8M8 7h8" stroke="#ce9770" /><path d="M9.500 10h4v3H16l-4.500 4.500L7 13h2.500z" fill="#3fa4e8" stroke="#1d6fae" strokeWidth=".7" /></TrayIcon>
        <TrayIcon><path d="M1.500 12.500h2v3h-2zM4.500 10.500h2v5h-2zM7.500 8.500h2v7h-2zM10.500 6h2v9.500h-2zM13.500 3.500h2.500v12h-2.500z" fill="#ccc" stroke="#808080" /></TrayIcon>
        <TrayIcon><path d="M2 2h9l3 4-4 7-6-2z" fill="#7fc22c" /><circle cx="11" cy="10.500" r="5.500" fill="#fcc21f" stroke="#d5860c" /><text x="11" y="14" textAnchor="middle" fontSize="9" fill="#222">2</text></TrayIcon>
        <TrayIcon><path d="M2.500 1.500v15M4.500 2v14.500" stroke="#8c8c8c" /><path d="M5 3c4-2 5 3 11 1-1 3-2 7-5 6.500C8.500 10 8 9 5 10.500z" fill="#fafafa" stroke="#7a7a7a" /></TrayIcon>
        <TrayIcon><rect x="1.500" y="1.500" width="15" height="11.500" fill="#848484" stroke="#26265c" /><path d="M1 15.500h8M11 15.500h6" stroke="#26265c" strokeWidth="2" /></TrayIcon>
        <TrayIcon><circle cx="9" cy="9" r="7.500" fill="#ef7b20" stroke="#b83d0c" /><circle cx="8.500" cy="9" r="3" stroke="#fff" strokeWidth="1.800" /><path d="M6 5c3-1.800 6.500-.5 6.500 3v4.500h2" stroke="#fff" strokeWidth="1.600" /></TrayIcon>
        <TrayIcon><circle cx="9" cy="9" r="8" fill="#65b649" /><path d="M4 5l2.500-.6L7.500 10c.5 2 3.500 2 3.200-.5L10 4.600l2.500-.6.9 6.500L15 12" stroke="#fff" strokeWidth="2" /></TrayIcon>
        <div className="flex items-center justify-center border-x border-[#d5d9e0] bg-gradient-to-b from-white from-75% to-[#dcedfa]">
          <svg width="18" height="18" viewBox="0 0 18 18" fill="none"><path d="M1.500 16.500V9C1.500 4 5 1.500 9 1.500h7.500V9c0 5-3 7.500-7 7.500z" fill="#fff" stroke="#bbb" /><path d="M2 6.500C4 4 8 4 9.500 6.500L15 5l-5 3.500C8.500 10.500 8.500 13 8 15.500 5 14 7 9 2 6.500z" fill="#2cb2d6" stroke="#166f93" strokeWidth=".6" /></svg>
        </div>
        <TrayIcon><path d="M1 6h4l5-5v16l-5-5H1z" fill="#d0573f" stroke="#6d2c23" /><path d="M12 6c1 2 1 4 0 6M14.500 3.500c2 3 2 8 0 11" stroke="#7a6a66" strokeWidth="1.300" /></TrayIcon>
      </div>
      <div className="flex flex-1 items-start justify-center border-t border-[#ccd9ea] bg-[#f1f5fb] pr-[8px] pt-[15px] text-[12px] leading-[14px] text-[#2a6cc4]">
        <Fit w={58}>Настроить</Fit>
      </div>
    </div>
  );
}

function TrafficGadget() {
  return (
    <div className="absolute left-[872px] top-[88px] flex h-[42px] w-[59px] gap-[2px] border-b border-r border-[#999] bg-[#f6f2ee]/80 pl-[7px] pt-[7px] shadow-[1px_1px_1px_#bbb]">
      <div className="flex h-[27px] w-[27px] flex-col items-center bg-[#a9d8ea]/70 text-[9.5px] leading-[12px] text-[#5e7480]">
        <Fit w={27}>5 KB/s</Fit>
        <svg width="16" height="15" viewBox="0 0 16 15" fill="none"><rect x="1" y="3" width="4" height="7" stroke="#93a6ae" /><path d="M5 3l3-2h5l2 2v6l-3 2H5z" fill="#e8d3bd" stroke="#aaa093" /><path d="M9 10h3v2h2l-3.500 3L7 12h2z" fill="#7fc4e8" /></svg>
      </div>
      <div className="flex h-[27px] w-[14px] flex-col items-center justify-between bg-[#a9d8ea]/60">
        <svg width="12" height="13" viewBox="0 0 12 13"><path d="M3.500 1h5v5H11l-5 6-5-6h2.500z" fill="#8ccdf0" stroke="#3c8fbf" /></svg>
        <svg width="12" height="11" viewBox="0 0 12 11"><path d="M1 2.500h10L6 8.500z" fill="#67828c" /></svg>
      </div>
    </div>
  );
}

/* ---------- window ---------- */

const WIN_BTN = "flex h-[17px] items-center justify-center rounded-[2px] border border-[#8d9bab] bg-[#ccdae8]";
const CHILD_BTN = "flex h-[18px] w-[18px] items-center justify-center border border-[#a9bccd] bg-[#dcebf8]";

const MENU: [string, number, string][] = [
  ["Файл", 27, "w-[46px]"], ["Вид", 19, "w-[37px]"], ["Вставка", 41, "w-[60px]"], ["Графики", 43, "w-[61px]"],
  ["Сервис", 37, "w-[55px]"], ["Окно", 26, "w-[44px]"], ["Справка", 43, "w-[60px]"],
];

export default function App() {
  return (
    <div className="relative flex h-[539px] w-[1023px] flex-col overflow-hidden bg-[#f0f0f0] font-['DejaVu_Sans_Condensed','DejaVu_Sans',sans-serif] text-black [font-stretch:condensed]">
      <div className="flex h-[30px] shrink-0 items-center border-t border-[#666] bg-gradient-to-b from-[#c0ccd9] to-[#d9e7f4] pl-[2px] pt-[6px]">
        <svg width="16" height="16" viewBox="0 0 16 16" fill="none">
          <rect width="16" height="16" fill="#15100a" />
          <path d="M0 5l4-2 4 1 4-3 4 1" stroke="#e03a1c" strokeWidth="1.600" /><path d="M0 8l4-2 4 1 4-3 4 1" stroke="#f0882c" strokeWidth="1.400" />
          <path d="M0 11l4-2 4 1 4-3 4 1" stroke="#a5cf38" strokeWidth="1.400" /><path d="M0 14l4-2 4 1 4-3 4 1" stroke="#35a23c" strokeWidth="1.500" />
        </svg>
        <div className="ml-1 flex-1 text-[12px] text-[#3d454e]"><Fit w={231}>1616351: Alpari Limited MT4 - [EURAUD,H1]</Fit></div>
        <div className="flex gap-[2px] pr-[1px]">
          <div className={`${WIN_BTN} w-[31px]`}><svg width="12" height="6" viewBox="0 0 12 6"><rect x="1" y="1.500" width="10" height="3.500" rx="1" fill="#fff" stroke="#4d5a68" /></svg></div>
          <div className={`${WIN_BTN} w-[31px]`}><svg width="11" height="9" viewBox="0 0 11 9"><rect x=".5" y=".5" width="10" height="8" rx="1" fill="#fff" stroke="#4d5a68" /><rect x="3.500" y="3.500" width="4" height="2" stroke="#4d5a68" fill="#ccdae8" /></svg></div>
          <div className={`${WIN_BTN} w-[31px]`}><svg width="12" height="10" viewBox="0 0 12 10"><path d="M2 1l8 8M10 1L2 9" stroke="#4d5a68" strokeWidth="3.600" /><path d="M2.500 1.500l7 7M9.500 1.500l-7 7" stroke="#fff" strokeWidth="1.700" /></svg></div>
        </div>
      </div>

      <div className="flex h-[21px] shrink-0 items-center border-b border-[#a0a0a0] pl-[5px] text-[11.5px] text-[#a2a2a2]">
        <svg width="15" height="15" viewBox="0 0 15 15" fill="none"><rect x=".5" y=".5" width="10" height="8" fill="#e8f3fd" stroke="#69a0d0" /><rect x="4" y="5" width="10" height="9" rx="1" fill="#e8f3fd" stroke="#4e8cc4" /><path d="M2 3h7" stroke="#7fb2dc" /><path d="M5.500 11l1.500-3 2 4 1.500-3.500 2 3" stroke="#5f7f9c" /></svg>
        <div className="flex flex-1 pl-[9px]">
          {MENU.map(([m, w, cls]) => <div key={m} className={cls}><Fit w={w}>{m}</Fit></div>)}
        </div>
        <div className="flex gap-[1px]">
          <div className={CHILD_BTN}><div className="mt-[4px] h-[2px] w-[6px] bg-[#8496a6]" /></div>
          <div className={CHILD_BTN}><svg width="9" height="9" viewBox="0 0 9 9" fill="none"><path d="M3 3V1h5v4H6M1 4h5v4H1z" stroke="#8496a6" strokeWidth="1.500" /></svg></div>
          <div className={CHILD_BTN}><svg width="8" height="8" viewBox="0 0 8 8"><path d="M1 1l6 6M7 1L1 7" stroke="#8496a6" strokeWidth="1.800" /></svg></div>
        </div>
      </div>

      <div className="mt-[1px] flex h-[26px] shrink-0"><Toolbar /><SearchBox /></div>
      <div className="w-[565px] shrink-0 pt-[1px]"><LineToolbar /></div>

      <div className="flex h-[345px] shrink-0">
        <div className="flex w-[187px] shrink-0 flex-col border-r border-[#b5b5b5]">
          <MarketWatch />
          <Navigator />
        </div>
        <div className="flex flex-1 flex-col border-l border-[#777] pl-px">
          <div className="h-px w-full bg-[#777]" />
          <div className="relative h-[322px]"><Chart /><OneClick /></div>
          <div className="h-px w-full bg-white" />
          <ChartTabs />
        </div>
      </div>

      <Terminal />
      <Tray />
      <TrafficGadget />
    </div>
  );
}
